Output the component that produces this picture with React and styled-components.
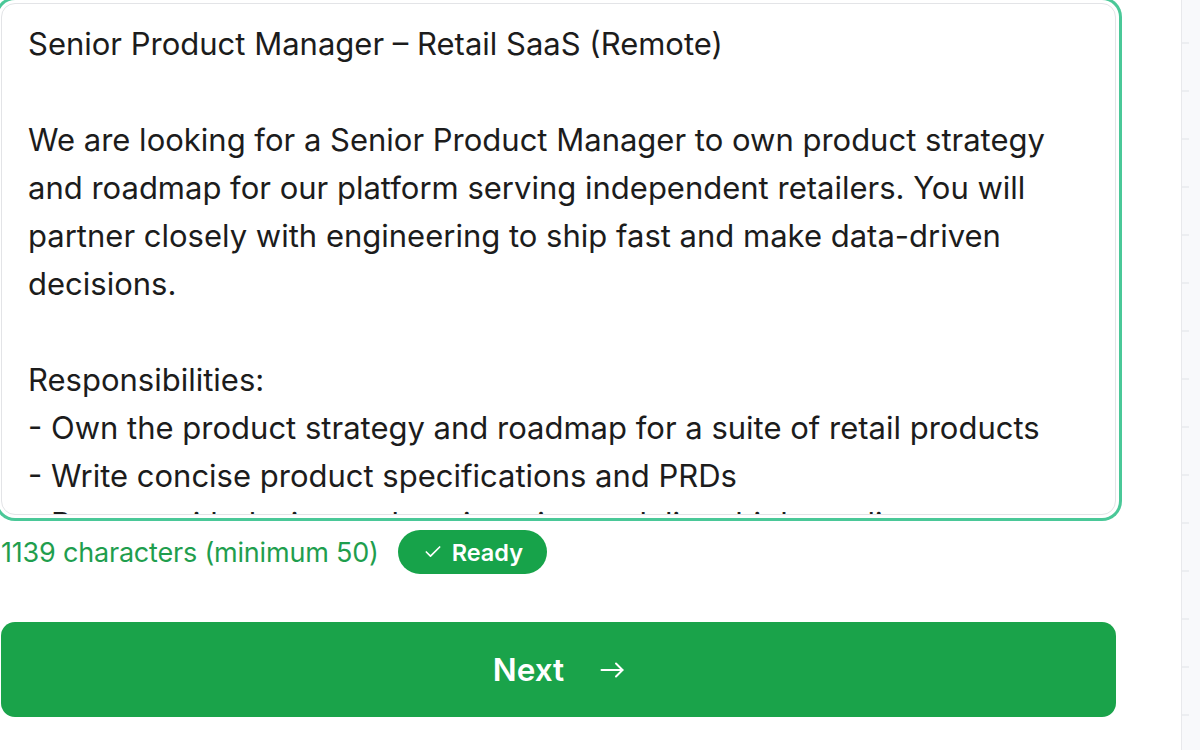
import React from 'react';
import styled, { createGlobalStyle } from 'styled-components';
import { Check } from 'lucide-react';

const GlobalStyle = createGlobalStyle`
	html, body {
		margin: 0;
		padding: 0;
		background: #fff;
		font-family: Inter, 'Liberation Sans', sans-serif;
	}
`;

const Page = styled.div`
	display: flex;
	width: 1200px;
	height: 750px;
	overflow: hidden;
	background: #fff;
`;

const Main = styled.main`
	width: 1181px;
	padding: 3px 0 0 1px;
	box-sizing: border-box;
	display: flex;
	flex-direction: column;
`;

const Column = styled.div`
	width: 1115px;
	display: flex;
	flex-direction: column;
`;

const Side = styled.aside`
	flex: 1;
	border-left: 1.5px solid #e8e9ec;
	background: #f8f9fb repeating-linear-gradient(
		to bottom,
		transparent 0,
		transparent 42px,
		#eceef1 42px,
		#eceef1 44px,
		transparent 44px,
		transparent 48px
	);
	background-size: 7px 100%;
	background-repeat: no-repeat;
`;

const Field = styled.textarea`
	display: block;
	width: 100%;
	height: 512px;
	box-sizing: border-box;
	margin: 0;
	padding: 16px 26px;
	border: 1.5px solid #e3e4e7;
	border-radius: 14px;
	box-shadow: 0 0 0 3px #fff, 0 0 0 6px #4ac898;
	outline: none;
	resize: none;
	overflow: hidden;
	font-family: Inter, 'Liberation Sans', sans-serif;
	font-size: 31px;
	line-height: 48px;
	color: #1c1c1c;
	background: #fff;
`;

const StatusRow = styled.div`
	display: flex;
	align-items: center;
	gap: 19px;
	margin-top: 15px;
`;

const Count = styled.span`
	font-size: 27px;
	color: #1f9e4e;
	letter-spacing: -0.2px;
`;

const Badge = styled.span`
	display: inline-flex;
	align-items: center;
	gap: 9px;
	height: 44px;
	padding: 0 24px 0 25px;
	border-radius: 22px;
	background: #17a34a;
	color: #fff;
	font-size: 23.5px;
	font-weight: 600;
`;

const NextButton = styled.button`
	display: flex;
	align-items: center;
	justify-content: center;
	gap: 36px;
	height: 95px;
	margin-top: 48px;
	border: none;
	border-radius: 14px;
	background: #1aa34a;
	color: #fff;
	font-family: Inter, 'Liberation Sans', sans-serif;
	font-size: 31.5px;
	font-weight: 600;
	cursor: pointer;
`;

const Arrow = () => (
	<svg width="24" height="16" viewBox="0 0 24 16" fill="none" stroke="currentColor" strokeWidth="2" strokeLinecap="round" strokeLinejoin="round">
		<path d="M1.5 8H22.5" />
		<path d="M16 1.5L22.5 8L16 14.5" />
	</svg>
);

const text = `Senior Product Manager – Retail SaaS (Remote)

We are looking for a Senior Product Manager to own product strategy and roadmap for our platform serving independent retailers. You will partner closely with engineering to ship fast and make data-driven decisions.

Responsibilities:
- Own the product strategy and roadmap for a suite of retail products
- Write concise product specifications and PRDs
- Partner with design and engineering to deliver high-quality experiences on time
- Analyze product metrics and customer feedback to prioritize the backlog`;

const App = () => {
	return (
		<>
			<GlobalStyle />
			<Page>
				<Main>
					<Column>
						<Field defaultValue={text} spellCheck={false} />
						<StatusRow>
							<Count>1139 characters (minimum 50)</Count>
							<Badge>
								<Check size={20} strokeWidth={2} />
								Ready
							</Badge>
						</StatusRow>
						<NextButton>
							Next
							<Arrow />
						</NextButton>
					</Column>
				</Main>
				<Side />
			</Page>
		</>
	);
};

export default App;
